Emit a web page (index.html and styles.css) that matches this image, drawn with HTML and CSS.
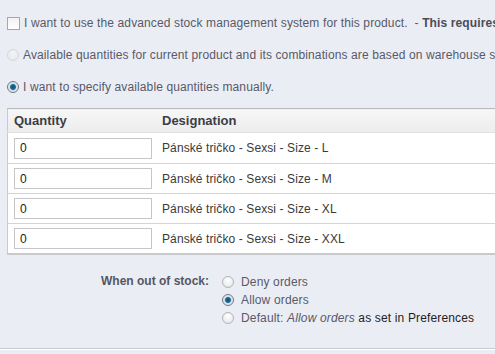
FILE: index.html
```html
<!DOCTYPE html>
<html lang="en">
<head>
    <meta charset="UTF-8">
    <title>Quantities</title>
    <link rel="stylesheet" href="styles.css">
</head>
<body>
    <div class="page">
        <div class="option">
            <span class="checkbox"></span>
            <span>I want to use the advanced stock management system for this product. &nbsp;- <b>This requires you to enable advanced stock management.</b></span>
        </div>
        <div class="option">
            <span class="radio disabled"></span>
            <span>Available quantities for current product and its combinations are based on warehouse stock in your stock management.</span>
        </div>
        <div class="option">
            <span class="radio checked"></span>
            <span>I want to specify available quantities manually.</span>
        </div>

        <table class="qty-table">
            <thead>
                <tr>
                    <th class="col-qty">Quantity</th>
                    <th>Designation</th>
                </tr>
            </thead>
            <tbody>
                <tr>
                    <td><input type="text" value="0"></td>
                    <td>Pánské tričko - Sexsi - Size - L</td>
                </tr>
                <tr>
                    <td><input type="text" value="0"></td>
                    <td>Pánské tričko - Sexsi - Size - M</td>
                </tr>
                <tr>
                    <td><input type="text" value="0"></td>
                    <td>Pánské tričko - Sexsi - Size - XL</td>
                </tr>
                <tr>
                    <td><input type="text" value="0"></td>
                    <td>Pánské tričko - Sexsi - Size - XXL</td>
                </tr>
            </tbody>
        </table>

        <div class="stock">
            <div class="stock-label">When out of stock:</div>
            <div class="stock-options">
                <div class="stock-option"><span class="radio"></span>Deny orders</div>
                <div class="stock-option"><span class="radio checked"></span>Allow orders</div>
                <div class="stock-option"><span class="radio"></span><span>Default: <i>Allow orders</i> <span class="dark">as set in Preferences</span></span></div>
            </div>
        </div>

        <div class="separator"></div>
    </div>
</body>
</html>
```

FILE: styles.css
```css
html, body {
    margin: 0;
    padding: 0;
    background-color: #ebedf4;
    overflow: hidden;
}

body {
    font-family: "Liberation Sans", Arial, sans-serif;
    font-size: 12px;
    color: #585a69;
}

.page {
    width: 700px;
    padding: 7px 0 0 0;
}

.option {
    display: flex;
    align-items: center;
    gap: 3px;
    height: 32px;
    padding-left: 7px;
    white-space: nowrap;
    letter-spacing: 0.12px;
}

.option b {
    color: #4a4c58;
}

.checkbox {
    display: inline-block;
    flex-shrink: 0;
    width: 11px;
    height: 11px;
    border: 1px solid #a5a7ad;
    background: linear-gradient(#f2f2f2, #ffffff);
    margin-right: 1px;
}

.radio {
    display: inline-block;
    box-sizing: border-box;
    width: 12px;
    height: 12px;
    border-radius: 50%;
    border: 1px solid #b2b4b8;
    background: radial-gradient(circle at 50% 35%, #ffffff, #e2e3e6);
    margin-right: 1px;
    flex-shrink: 0;
}

.radio.disabled {
    border-color: #d6d8dc;
    background: radial-gradient(circle at 50% 35%, #f4f5f7, #e3e5ea);
}

.radio.checked {
    border-color: #6b7787;
    background: radial-gradient(circle at 50% 50%, #0d4f72 0, #1b6f9b 2.5px, #d7dde4 3.5px, #f2f4f6 6px);
}

.qty-table {
    margin: 5px 0 0 7px;
    width: 640px;
    border-collapse: collapse;
    background: #fff;
    border: 1px solid #c9cacd;
    border-bottom: 2px solid #c9cacd;
}

.qty-table th {
    height: 23px;
    padding: 0 0 0 6px;
    text-align: left;
    font-size: 13px;
    color: #3c3d46;
    background: linear-gradient(#f7f7f7, #ececec);
    border-top: 1px solid #b8b9bd;
    border-bottom: 1px solid #e2e2e2;
}

.qty-table .col-qty {
    width: 142px;
}

.qty-table td {
    height: 29px;
    padding: 0 0 0 6px;
    color: #3a3a3a;
    border-top: 1px solid #d4d4d6;
    letter-spacing: 0.1px;
}

.qty-table tbody tr:first-child td {
    border-top: none;
    height: 30px;
}

.qty-table input {
    box-sizing: border-box;
    width: 138px;
    height: 21px;
    padding: 0 5px;
    border: 1px solid #c5c6c9;
    font-family: "Liberation Sans", Arial, sans-serif;
    font-size: 12px;
    color: #222;
    display: block;
}

.stock {
    display: flex;
    margin-top: 18px;
}

.stock-label {
    width: 209px;
    text-align: right;
    font-weight: bold;
    color: #55575f;
    padding-top: 1px;
}

.stock-options {
    margin-left: 13px;
    letter-spacing: 0.15px;
}

.stock-option {
    display: flex;
    align-items: center;
    gap: 7px;
    height: 18px;
}

.stock-option .radio {
    margin-right: 0;
}

.dark {
    color: #1e1e1e;
}

.separator {
    margin-top: 21px;
    height: 1px;
    background: #c8cacf;
    border-bottom: 1px solid #fff;
}
```
